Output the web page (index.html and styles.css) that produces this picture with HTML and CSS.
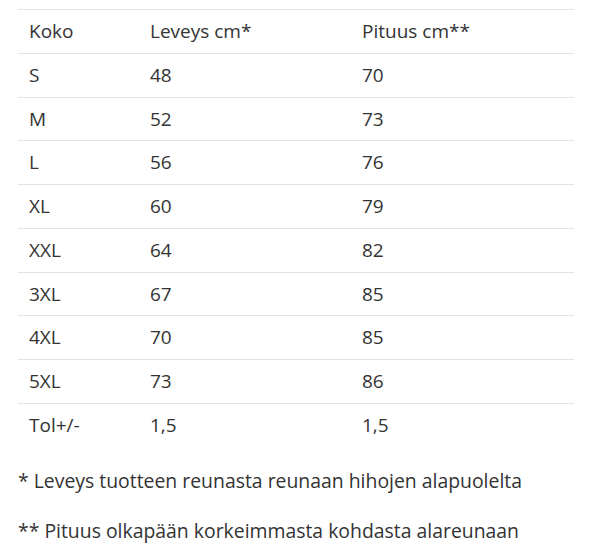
FILE: index.html
```html
<!DOCTYPE html>
<html lang="fi">
<head>
<meta charset="utf-8">
<link rel="stylesheet" href="styles.css">
</head>
<body>
<div class="wrap">
  <table class="sizes">
    <tbody>
      <tr><td>Koko</td><td>Leveys cm*</td><td>Pituus cm**</td></tr>
      <tr><td>S</td><td>48</td><td>70</td></tr>
      <tr><td>M</td><td>52</td><td>73</td></tr>
      <tr><td>L</td><td>56</td><td>76</td></tr>
      <tr><td>XL</td><td>60</td><td>79</td></tr>
      <tr><td>XXL</td><td>64</td><td>82</td></tr>
      <tr><td>3XL</td><td>67</td><td>85</td></tr>
      <tr><td>4XL</td><td>70</td><td>85</td></tr>
      <tr><td>5XL</td><td>73</td><td>86</td></tr>
      <tr class="last"><td>Tol+/-</td><td>1,5</td><td>1,5</td></tr>
    </tbody>
  </table>
  <p class="note">* Leveys tuotteen reunasta reunaan hihojen alapuolelta</p>
  <p class="note">** Pituus olkapään korkeimmasta kohdasta alareunaan</p>
</div>
</body>
</html>
```
FILE: styles.css
```css
html, body {
  margin: 0;
  padding: 0;
  background: #fff;
}
body {
  font-family: "Open Sans", "Liberation Sans", sans-serif;
  font-size: 19px;
  color: #333;
}
.wrap {
  padding: 9px 16px 0 18px;
}
.sizes {
  width: 556px;
  border-collapse: collapse;
  border-top: 1px solid #e3e3e3;
}
.sizes td {
  padding: 8px 11px;
  line-height: 26.75px;
  border-bottom: 1px solid #e3e3e3;
  text-align: left;
  vertical-align: middle;
}
.sizes td:nth-child(1) { width: 99px; }
.sizes td:nth-child(2) { width: 190px; }
.sizes tr.last td { border-bottom: none; }
.note {
  margin: 21px 0 0 0;
  font-size: 19.4px;
  line-height: 26.75px;
}
.note + .note {
  margin-top: 24px;
}
```
